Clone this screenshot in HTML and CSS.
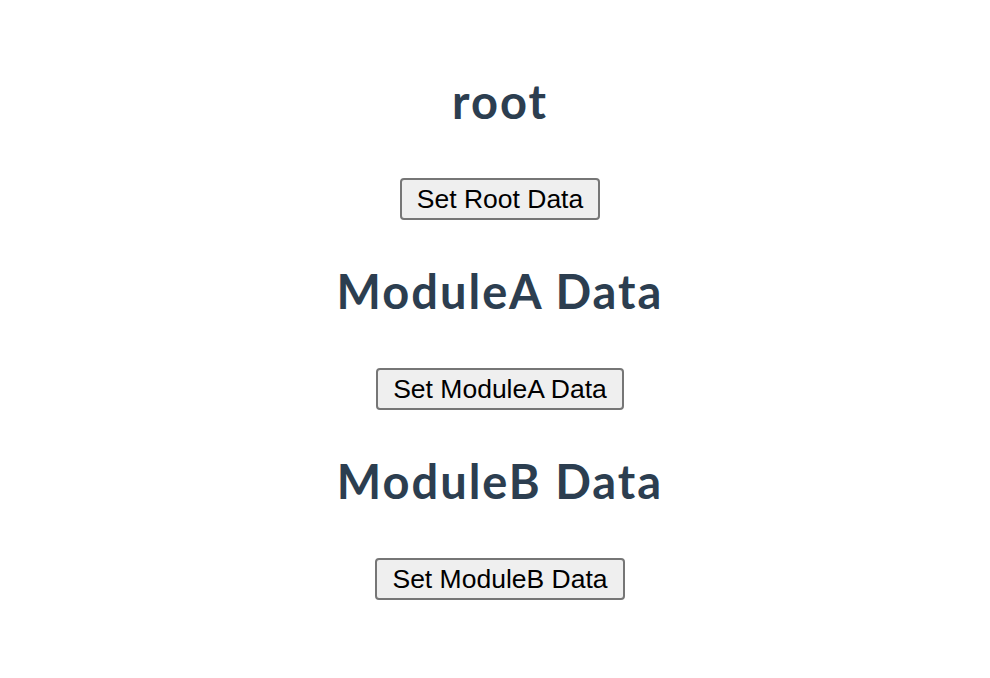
FILE: index.html
```html
<!DOCTYPE html>
<html lang="en">
<head>
    <meta charset="UTF-8">
    <meta name="viewport" content="width=device-width, initial-scale=1.0">
    <title>Store Modules</title>
    <link rel="stylesheet" href="styles.css">
</head>
<body>
    <div id="app">
        <div class="module">
            <h2>root</h2>
            <button>Set Root Data</button>
        </div>
        <div class="module">
            <h2>ModuleA Data</h2>
            <button>Set ModuleA Data</button>
        </div>
        <div class="module">
            <h2>ModuleB Data</h2>
            <button>Set ModuleB Data</button>
        </div>
    </div>
</body>
</html>
```

FILE: styles.css
```css
body {
    margin: 0;
    background-color: #fff;
}

#app {
    font-family: Lato, 'Noto Sans', Arial, sans-serif;
    color: #2c3e50;
    text-align: center;
    padding: 30px 0 0 10px;
    display: flex;
    flex-direction: column;
    align-items: center;
}

.module {
    display: flex;
    flex-direction: column;
    align-items: center;
}

.module h2 {
    margin: 42px 0 48px;
    font-size: 47px;
    font-weight: 700;
    line-height: 58px;
    letter-spacing: 2px;
}

button {
    font-family: 'Liberation Sans', Arial, sans-serif;
    font-size: 26.5px;
    color: #000;
    height: 42px;
    padding: 0 15px;
    background-color: #efefef;
    border: 2px solid #767676;
    border-radius: 4px;
}
```
